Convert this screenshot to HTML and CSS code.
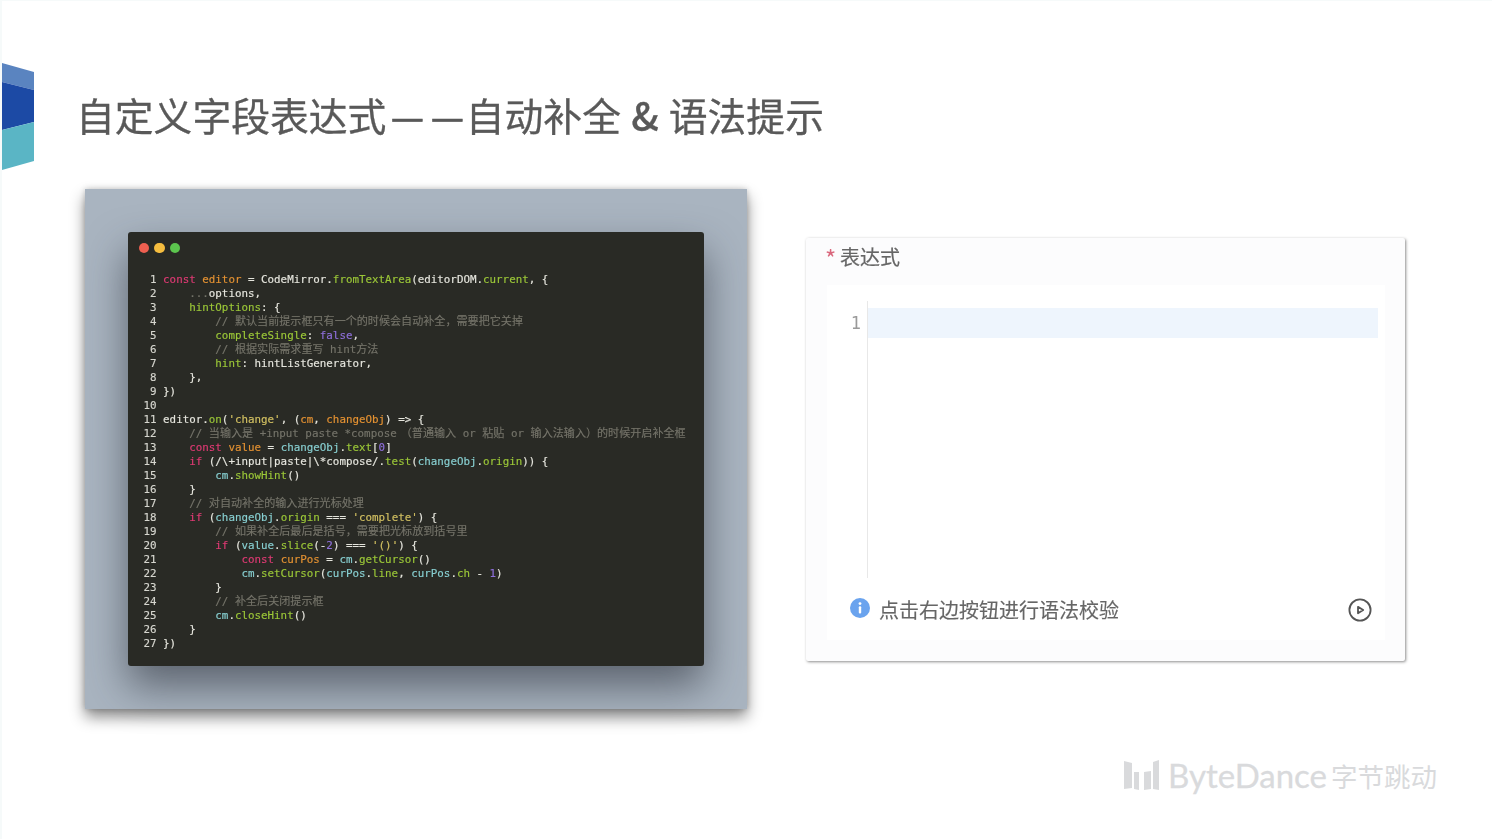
FILE: index.html
```html
<!DOCTYPE html>
<html lang="zh">
<head>
<meta charset="utf-8">
<title>自定义字段表达式</title>
<link rel="stylesheet" href="styles.css">
</head>
<body>
<div class="slide">
  <header class="header">
    <svg class="mark" width="34" height="107" viewBox="0 0 34 107" aria-hidden="true">
      <polygon points="2,0 34,9 34,27 2,19" fill="#5a84c0"/>
      <polygon points="2,19 34,27 34,59 2,67" fill="#1c4aa5"/>
      <polygon points="2,67 34,59 34,98 2,107" fill="#5ab5c5"/>
    </svg>
    <h1 class="title">自定义字段表达式<span class="dash">—</span><span class="dash">—</span>自动补全 <b class="amp">&amp;</b> 语法提示</h1>
  </header>
  <main class="stage">
    <section class="backdrop">
      <div class="window">
        <div class="dots"><i class="dot red"></i><i class="dot amber"></i><i class="dot green"></i></div>
<pre class="code"><span class="n"> 1</span> <span class="k">const</span> <span class="o">editor</span> = CodeMirror.<span class="f">fromTextArea</span>(editorDOM.<span class="f">current</span>, {
<span class="n"> 2</span>     <span class="c">...</span>options,
<span class="n"> 3</span>     <span class="f">hintOptions</span>: {
<span class="n"> 4</span>         <span class="c">// <span class="h">默认当前提示框只有一个的时候会自动补全，需要把它关掉</span></span>
<span class="n"> 5</span>         <span class="f">completeSingle</span>: <span class="p">false</span>,
<span class="n"> 6</span>         <span class="c">// <span class="h">根据实际需求重写</span> hint<span class="h">方法</span></span>
<span class="n"> 7</span>         <span class="f">hint</span>: hintListGenerator,
<span class="n"> 8</span>     },
<span class="n"> 9</span> })
<span class="n">10</span>
<span class="n">11</span> editor.<span class="f">on</span>(<span class="s">'change'</span>, (<span class="o">cm</span>, <span class="o">changeObj</span>) =&gt; {
<span class="n">12</span>     <span class="c">// <span class="h">当输入是</span> +input paste *compose<span class="h wide">（普通输入</span> or <span class="h">粘贴</span> or <span class="h">输入法输入）的时候开启补全框</span></span>
<span class="n">13</span>     <span class="k">const</span> <span class="o">value</span> = <span class="t">changeObj</span>.<span class="f">text</span>[<span class="p">0</span>]
<span class="n">14</span>     <span class="k">if</span> (/\+input|paste|\*compose/.<span class="f">test</span>(<span class="t">changeObj</span>.<span class="f">origin</span>)) {
<span class="n">15</span>         <span class="t">cm</span>.<span class="f">showHint</span>()
<span class="n">16</span>     }
<span class="n">17</span>     <span class="c">// <span class="h">对自动补全的输入进行光标处理</span></span>
<span class="n">18</span>     <span class="k">if</span> (<span class="t">changeObj</span>.<span class="f">origin</span> === <span class="s">'complete'</span>) {
<span class="n">19</span>         <span class="c">// <span class="h">如果补全后最后是括号，需要把光标放到括号里</span></span>
<span class="n">20</span>         <span class="k">if</span> (<span class="t">value</span>.<span class="f">slice</span>(-<span class="p">2</span>) === <span class="s">'()'</span>) {
<span class="n">21</span>             <span class="k">const</span> <span class="o">curPos</span> = <span class="t">cm</span>.<span class="f">getCursor</span>()
<span class="n">22</span>             <span class="t">cm</span>.<span class="f">setCursor</span>(<span class="t">curPos</span>.<span class="f">line</span>, <span class="t">curPos</span>.<span class="f">ch</span> - <span class="p">1</span>)
<span class="n">23</span>         }
<span class="n">24</span>         <span class="c">// <span class="h">补全后关闭提示框</span></span>
<span class="n">25</span>         <span class="t">cm</span>.<span class="f">closeHint</span>()
<span class="n">26</span>     }
<span class="n">27</span> })</pre>
      </div>
    </section>
    <section class="form">
      <div class="label"><span class="req">*</span><span class="label-text">表达式</span></div>
      <div class="panel">
        <div class="editor">
          <div class="gutter">1</div>
          <div class="lines"><div class="active"></div></div>
        </div>
        <div class="hint">
          <svg class="info" width="20" height="20" viewBox="0 0 20 20" aria-hidden="true">
            <circle cx="10" cy="10" r="10" fill="#6aa3ee"/>
            <circle cx="10" cy="5.6" r="1.4" fill="#fff"/>
            <rect x="8.8" y="8.2" width="2.4" height="7.4" rx="1" fill="#fff"/>
          </svg>
          <span class="hint-text">点击右边按钮进行语法校验</span>
          <svg class="play" width="24" height="24" viewBox="0 0 24 24" aria-hidden="true">
            <circle cx="12" cy="12" r="10.6" fill="none" stroke="#555" stroke-width="1.8"/>
            <path d="M10 8.8 L15.2 12 L10 15.2 Z" fill="none" stroke="#555" stroke-width="1.8" stroke-linejoin="round"/>
          </svg>
        </div>
      </div>
    </section>
  </main>
  <footer class="footer">
    <svg class="brand-mark" width="37" height="32" viewBox="0 0 37 32" aria-hidden="true">
      <polygon points="1,1 9,3 9,28 1,29" fill="#d9dadc"/>
      <polygon points="11,12 16,12 16,30 11,29" fill="#d9dadc"/>
      <polygon points="21,12 28,11 28,29 21,30" fill="#d9dadc"/>
      <polygon points="30,2 36,0 36,30 30,29" fill="#d9dadc"/>
    </svg>
    <span class="brand-en">ByteDance</span>
    <span class="brand-cn">字节跳动</span>
  </footer>
</div>
</body>
</html>
```
FILE: styles.css
```css
* { box-sizing: border-box; }
html, body { margin: 0; padding: 0; }
body { background: #fff; width: 1492px; height: 839px; overflow: hidden; }
.slide {
  width: 1492px;
  height: 839px;
  display: flex;
  flex-direction: column;
  background: #fff;
  box-shadow: inset 2px 1px 0 #f6fafa;
  font-family: "Noto Sans CJK SC", "Noto Sans", sans-serif;
  padding-top: 63px;
}
.header { display: flex; align-items: center; gap: 45px; height: 107px; }
.mark { flex: none; }
.title {
  margin: 0 0 6px -3px;
  font-size: 38.8px;
  font-weight: 400;
  line-height: 56px;
  color: #595959;
  white-space: nowrap;
  word-spacing: 1.5px;
  -webkit-text-stroke: .3px #595959;
  filter: blur(.3px);
}
.dash { display: inline-block; margin: 0 1.5px 0 3.5px; transform: scaleX(.96); -webkit-text-stroke: .6px #595959; }
.amp { font-weight: 500; }
.stage {
  display: flex;
  align-items: center;
  gap: 59px;
  margin: 19px 0 0 85px;
}
.backdrop {
  width: 662px;
  height: 520px;
  padding: 43px;
  background: #a9b4c0;
  box-shadow: 0 8px 14px rgba(0, 0, 0, .45), 0 0 6px rgba(0, 0, 0, .2);
}
.window {
  width: 576px;
  height: 434px;
  border-radius: 3px;
  background: #292a25;
  box-shadow: 0 20px 40px rgba(40, 45, 55, .6);
}
.dots { display: flex; gap: 5px; height: 41px; padding: 10.5px 0 0 10.5px; }
.dot { width: 10.5px; height: 10.5px; border-radius: 50%; }
.red { background: #ee5f50; }
.amber { background: #f5bd3f; }
.green { background: #5cc54e; }
.code {
  margin: 0;
  padding-left: 15.5px;
  font-family: "DejaVu Sans Mono", "Noto Sans CJK SC", monospace;
  font-size: 10.85px;
  line-height: 14px;
  color: #e6e6de;
  -webkit-text-stroke: .15px currentColor;
  filter: blur(.3px);
}
.n { color: #d6d6cf; }
.k { color: #e03a74; }
.o { color: #e59232; }
.f { color: #9cc838; }
.c { color: #75746a; }
.p { color: #8f70dc; }
.s { color: #d3c162; }
.t { color: #88d0d2; }
.h { font-family: "Noto Sans CJK SC", sans-serif; font-size: 11.08px; line-height: 0; }
.wide { padding-left: 4px; }
.form {
  width: 599px;
  height: 423px;
  display: flex;
  flex-direction: column;
  border-radius: 2px;
  background: #fcfcfd;
  box-shadow: 1px 1px 3px rgba(0, 0, 0, .45);
  padding: 0 20px 21px 21px;
}
.label {
  display: flex;
  align-items: center;
  gap: 7px;
  height: 38px;
  margin-left: -2px;
  color: #666;
  filter: blur(.3px);
}
.label-text { font-size: 20px; line-height: 38px; -webkit-text-stroke: .2px #666; }
.req { width: 8px; color: #d9677c; font-size: 24px; line-height: 24px; margin-top: 2px; }
.panel { flex: 1; display: flex; flex-direction: column; margin-top: 9px; background: #fff; }
.editor { flex: 1; min-height: 0; display: flex; padding: 16px 7px 0 0; }
.gutter {
  width: 41px;
  flex: none;
  height: 277px;
  padding: 7px 6px 0 0;
  border-right: 1px solid #e8e8e8;
  text-align: right;
  font-family: "DejaVu Sans Mono", monospace;
  font-size: 17px;
  line-height: 30px;
  color: #9a9a9a;
  filter: blur(.3px);
}
.lines { flex: 1; padding-top: 7px; }
.active { height: 30px; background: #eef5fd; }
.hint {
  display: flex;
  align-items: center;
  height: 60px;
  flex: none;
  padding: 0 13px 0 23px;
}
.info { margin-top: -3px; flex: none; }
.hint-text { margin-left: 9px; flex: 1; font-size: 20px; color: #666; -webkit-text-stroke: .15px #666; filter: blur(.3px); }
.play { flex: none; }
.footer {
  display: flex;
  align-items: center;
  align-self: flex-end;
  margin: 50px 55px 0 0;
  height: 33px;
  color: #d9dadc;
}
.brand-mark { flex: none; margin-right: 8px; }
.brand-en { font-family: Lato, sans-serif; font-size: 33px; font-weight: 400; line-height: 33px; -webkit-text-stroke: .3px #d9dadc; }
.brand-cn { margin-left: 4px; font-size: 26.5px; font-weight: 400; line-height: 33px; }
```
